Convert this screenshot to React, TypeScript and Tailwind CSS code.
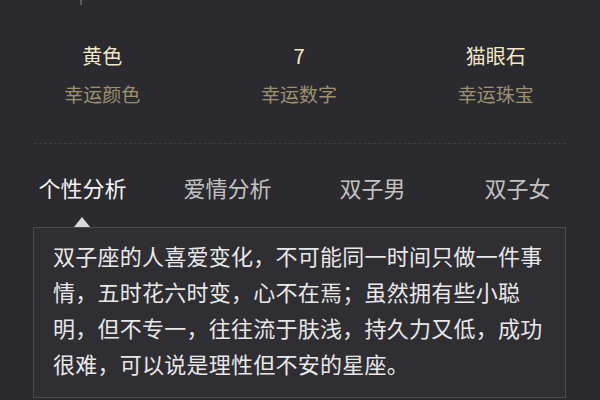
import React from "react";

export default function App() {
  const stats = [
    { v: "黄色", l: "幸运颜色" },
    { v: "7", l: "幸运数字" },
    { v: "猫眼石", l: "幸运珠宝" },
  ];
  const tabs = ["个性分析", "爱情分析", "双子男", "双子女"];
  return (
    <div
      className="w-[600px] h-[400px] overflow-hidden bg-[#2b2a2f] flex flex-col"
      style={{ fontFamily: '"Noto Sans CJK SC", "Noto Sans", sans-serif' }}
    >
      <div className="ml-[80px] w-[2px] h-[5px] bg-[#5a5960]" />
      <div className="mt-[37px] ml-[4px] w-[590px] grid grid-cols-3">
        {stats.map((s) => (
          <div key={s.l} className="flex flex-col items-center">
            <div className="text-[20px] leading-[28px] text-[#f2e8c6]">{s.v}</div>
            <div className="mt-[11px] text-[19px] leading-[26px] text-[#9d9170]">{s.l}</div>
          </div>
        ))}
      </div>
      <div className="mt-[36px] ml-[34px] w-[532px] border-t border-dashed border-[#3f3e44]" />
      <div className="mt-[28px] ml-[10px] w-[580px] grid grid-cols-4">
        {tabs.map((t, i) => (
          <div
            key={t}
            className={
              "text-center text-[22px] leading-[30px] " +
              (i === 0 ? "text-[#f4f4f4]" : "text-[#c2c2c2]")
            }
          >
            {t}
          </div>
        ))}
      </div>
      <div className="mt-[15px] ml-[74px] w-0 h-0 border-l-[8px] border-r-[8px] border-b-[10px] border-l-transparent border-r-transparent border-b-[#d9d9d9]" />
      <div className="ml-[33px] w-[533px] border border-[#4b4a50] bg-[#2f2e33] pt-[9px] pb-[16px] pl-[19px]">
        <p className="w-[496px] text-[22px] leading-[36px] tracking-[0.25px] text-[#e8e8e8]">
          双子座的人喜爱变化，不可能同一时间只做一件事情，五时花六时变，心不在焉；虽然拥有些小聪明，但不专一，往往流于肤浅，持久力又低，成功很难，可以说是理性但不安的星座。
        </p>
      </div>
    </div>
  );
}
